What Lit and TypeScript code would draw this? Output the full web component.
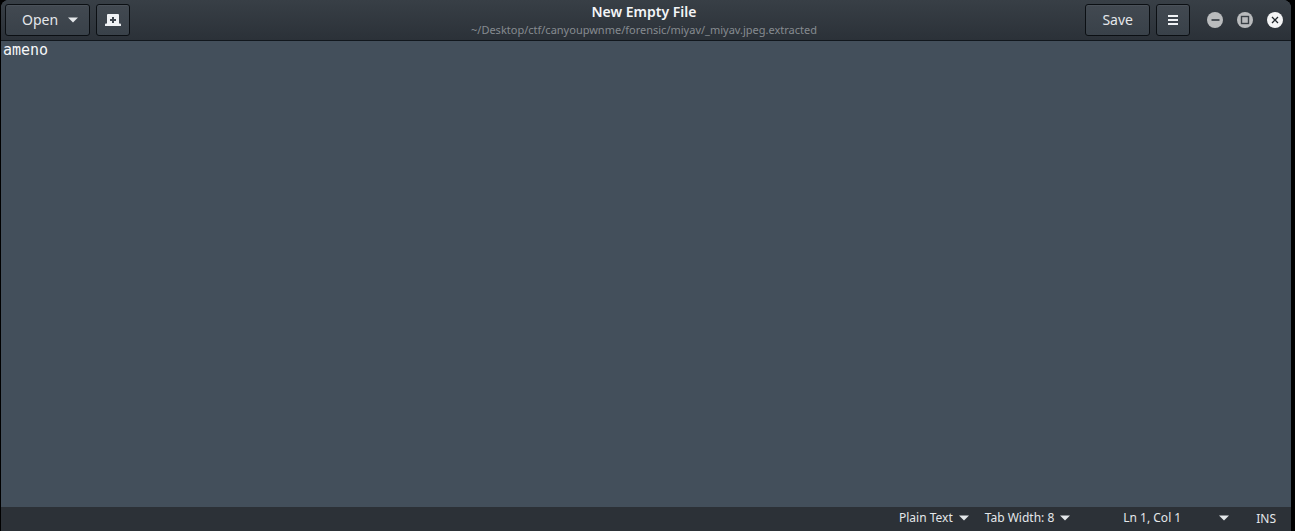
import { LitElement, html, css, svg } from "lit";
import { customElement, state } from "lit/decorators.js";

const caret = html`<svg class="caret" width="10" height="6" viewBox="0 0 10 6" aria-hidden="true">
  <path d="M0 0.5h10L5 5.5z" fill="currentColor"></path>
</svg>`;

const glyphs = {
  minimize: svg`<path d="M4.500 8h8" stroke="#2f363d" stroke-width="1.6" fill="none"></path>`,
  maximize: svg`<rect x="4.5" y="4.5" width="7" height="7" stroke="#3a4046" stroke-width="1.4" fill="none"></rect>`,
  close: svg`<path d="M5 5l6 6M11 5l-6 6" stroke="#20262c" stroke-width="1.3" fill="none"></path>`,
};

@customElement("header-bar")
export class HeaderBar extends LitElement {
  static styles = css`
    :host {
      display: grid;
      grid-template-columns: 1fr auto 1fr;
      align-items: center;
      height: 40px;
      padding: 0 8px 0 4px;
      border-bottom: 1px solid #11171d;
      background: linear-gradient(#383f46, #2b3138);
    }
    .group {
      display: flex;
      align-items: center;
      gap: 6px;
    }
    .end {
      justify-content: flex-end;
    }
    button {
      font: inherit;
      color: inherit;
      margin: 0;
    }
    .tool {
      display: flex;
      align-items: center;
      justify-content: center;
      box-sizing: border-box;
      height: 32px;
      min-width: 34px;
      padding: 0;
      border: 1px solid #0b0f13;
      border-radius: 3px;
      background: linear-gradient(#424951, #394149);
      box-shadow: inset 0 1px #4a5159;
      line-height: 20px;
    }
    .text {
      padding: 0 16px;
      gap: 10px;
    }
    .open {
      padding-right: 11px;
    }
    .titles {
      text-align: center;
    }
    h1 {
      margin: 0;
      font-size: 14px;
      line-height: 20px;
      font-weight: 600;
      color: #f3f5f7;
    }
    .path {
      margin: 0;
      font-size: 11px;
      line-height: 16px;
      color: #868b90;
    }
    .controls {
      display: flex;
      gap: 14px;
      margin-left: 11px;
    }
    .control {
      display: flex;
      padding: 0;
      border: 0;
      background: none;
    }
  `;

  private control(label: string, fill: string, glyph: unknown) {
    return html`<button class="control" aria-label=${label}>
      <svg width="16" height="16" viewBox="0 0 16 16">
        <circle cx="8" cy="8" r="8" fill=${fill}></circle>
        ${glyph}
      </svg>
    </button>`;
  }

  render() {
    return html`
      <div class="group">
        <button class="tool text open">Open ${caret}</button>
        <button class="tool" aria-label="New tab">
          <svg width="16" height="12" viewBox="0 0 16 12">
            <path
              fill="#f0f2f5"
              fill-rule="evenodd"
              d="M3 0h10q1 0 1 1V9.500h1q1 0 1 1V12H0v-1.500Q0 9.500 1 9.500h1V1Q2 0 3 0zM7 3v2H5v2h2v2h2V7h2V5H9V3z"
            ></path>
          </svg>
        </button>
      </div>
      <div class="titles">
        <h1>New Empty File</h1>
        <p class="path">~/Desktop/ctf/canyoupwnme/forensic/miyav/_miyav.jpeg.extracted</p>
      </div>
      <div class="group end">
        <button class="tool text">Save</button>
        <button class="tool" aria-label="Menu">
          <svg width="10" height="10" viewBox="0 0 10 10">
            <path d="M0 0h10v2H0zM0 4h10v2H0zM0 8h10v2H0z" fill="#f0f2f5"></path>
          </svg>
        </button>
        <div class="controls">
          ${this.control("Minimize", "#b9bbbd", glyphs.minimize)}
          ${this.control("Maximize", "#b9bbbd", glyphs.maximize)}
          ${this.control("Close", "#f3f4f5", glyphs.close)}
        </div>
      </div>
    `;
  }
}

@customElement("status-bar")
export class StatusBar extends LitElement {
  static styles = css`
    :host {
      display: flex;
      justify-content: flex-end;
      align-items: center;
      height: 24px;
      padding-right: 15px;
      background: #2c3137;
      font-size: 12px;
      line-height: 16px;
      color: #e4e7ea;
    }
    button {
      display: flex;
      align-items: center;
      gap: 6px;
      margin: 0 16px 0 0;
      padding: 0 0 2px;
      border: 0;
      background: none;
      font: inherit;
      color: inherit;
    }
    .position {
      gap: 38px;
      margin: 0 27px 0 37px;
    }
  `;

  render() {
    return html`
      <button>Plain Text ${caret}</button>
      <button>Tab Width: 8 ${caret}</button>
      <button class="position">Ln 1, Col 1 ${caret}</button>
      <span>INS</span>
    `;
  }
}

@customElement("app-root")
export class AppRoot extends LitElement {
  static styles = css`
    :host {
      display: block;
      height: 100vh;
      box-sizing: border-box;
      padding: 0 4px 0 1px;
      background: #000;
      font-family: "Noto Sans", sans-serif;
      font-size: 14px;
      color: #e4e7ea;
    }
    .window {
      display: flex;
      flex-direction: column;
      height: 100%;
      overflow: hidden;
      border-radius: 8px 8px 0 0;
      background: #434f5b;
    }
    .editor {
      flex: 1;
      min-height: 0;
      margin: 0;
      padding: 0 2px;
      border: 0;
      outline: 0;
      resize: none;
      background: #434f5b;
      color: #f5f7f9;
      font: 15px/18px "DejaVu Sans Mono", monospace;
    }
  `;

  @state() private content = "ameno";

  render() {
    return html`
      <main class="window">
        <header-bar></header-bar>
        <textarea
          class="editor"
          aria-label="Document"
          spellcheck="false"
          .value=${this.content}
          @input=${(e: Event) => (this.content = (e.target as HTMLTextAreaElement).value)}
        ></textarea>
        <status-bar></status-bar>
      </main>
    `;
  }
}
